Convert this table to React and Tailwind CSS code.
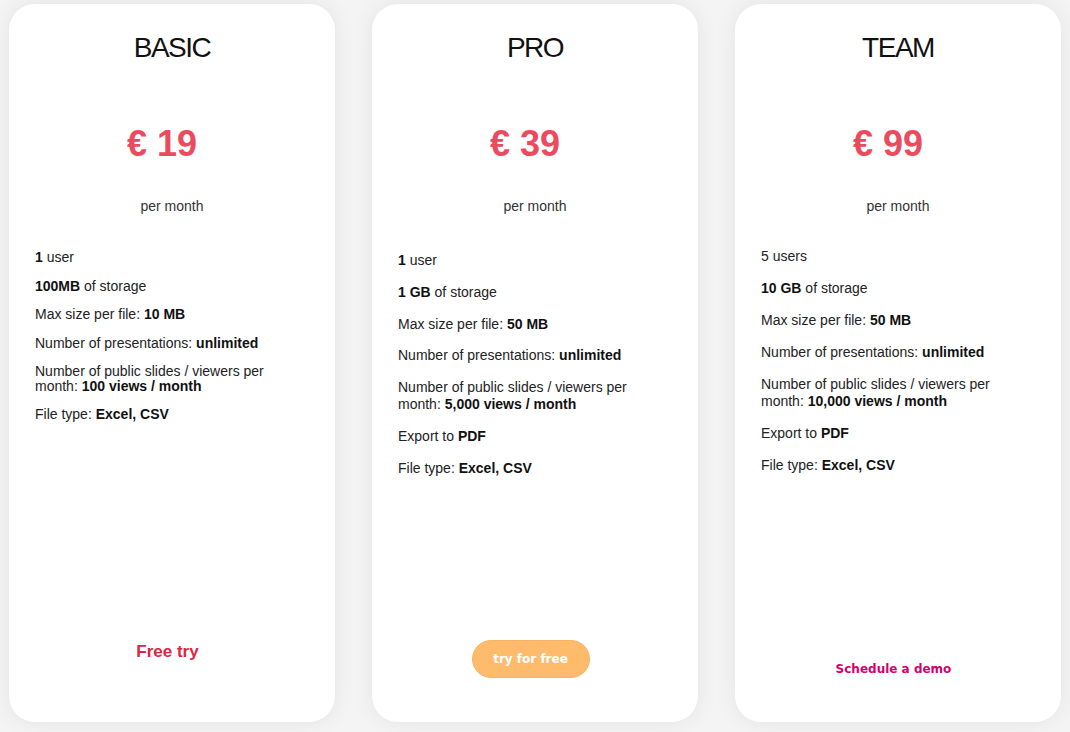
const plans = [
  {
    name: 'BASIC',
    price: '€ 19',
    featClass: 'mt-[34px] gap-[14px] leading-[14.5px]',
    features: [
      [<b key="b">1</b>, ' user'],
      [<b key="b">100MB</b>, ' of storage'],
      ['Max size per file: ', <b key="b">10 MB</b>],
      ['Number of presentations: ', <b key="b">unlimited</b>],
      [<span key="a" className="block">Number of public slides / viewers per</span>, <span key="m">month: </span>, <b key="b">100 views / month</b>],
      ['File type: ', <b key="b">Excel, CSV</b>],
    ],
    footer: (
      <div className="pb-[60px] pr-[9px] flex justify-center">
        <a className="text-[17px] leading-[20px] font-bold text-[#dc2544] cursor-pointer">Free try</a>
      </div>
    ),
  },
  {
    name: 'PRO',
    price: '€ 39',
    featClass: 'mt-[36px] gap-[14.5px] leading-[17.3px]',
    features: [
      [<b key="b">1</b>, ' user'],
      [<b key="b">1 GB</b>, ' of storage'],
      ['Max size per file: ', <b key="b">50 MB</b>],
      ['Number of presentations: ', <b key="b">unlimited</b>],
      [<span key="a" className="block">Number of public slides / viewers per</span>, <span key="m">month: </span>, <b key="b">5,000 views / month</b>],
      ['Export to ', <b key="b">PDF</b>],
      ['File type: ', <b key="b">Excel, CSV</b>],
    ],
    footer: (
      <div className="pb-[44px] pr-[9px] flex justify-center">
        <button className="h-[38px] w-[118px] rounded-full bg-[#fdbb6b] border border-[#f9b462] text-white text-[12px] font-bold font-['DejaVu_Sans',sans-serif]">
          try for free
        </button>
      </div>
    ),
  },
  {
    name: 'TEAM',
    price: '€ 99',
    featClass: 'mt-[32px] gap-[14.7px] leading-[17.3px]',
    features: [
      ['5 users'],
      [<b key="b">10 GB</b>, ' of storage'],
      ['Max size per file: ', <b key="b">50 MB</b>],
      ['Number of presentations: ', <b key="b">unlimited</b>],
      [<span key="a" className="block">Number of public slides / viewers per</span>, <span key="m">month: </span>, <b key="b">10,000 views / month</b>],
      ['Export to ', <b key="b">PDF</b>],
      ['File type: ', <b key="b">Excel, CSV</b>],
    ],
    footer: (
      <div className="pb-[45px] pr-[9px] flex justify-center">
        <a className="text-[12px] leading-[16px] font-bold text-[#d6006c] font-['DejaVu_Sans',sans-serif] cursor-pointer">
          Schedule a demo
        </a>
      </div>
    ),
  },
];

export default function App() {
  return (
    <div className="min-h-screen bg-[#f4f4f4] pt-[4px] px-[9px] font-['Liberation_Sans',Arial,sans-serif]">
      <div className="grid grid-cols-3 gap-[37px]">
        {plans.map(p => (
          <div
            key={p.name}
            className="h-[718px] bg-white rounded-[26px] shadow-[0_0_22px_rgba(0,0,0,0.07)] flex flex-col pt-[28px]"
          >
            {/* Cabecera */}
            <h2 className="text-center text-[28px] leading-[32px] tracking-[-1.5px] text-[#111]">{p.name}</h2>
            <div className="mt-[60px] text-center pr-5 text-[36px] leading-[40px] font-bold text-[#eb4a5f]">{p.price}</div>
            <div className="mt-[32px] text-center text-[14px] leading-[20px] text-[#333]">per month</div>

            {/* Características */}
            <ul className={`flex flex-col flex-1 px-[26px] text-[14px] text-[#222] ${p.featClass}`}>
              {p.features.map((f, i) => (
                <li key={i} className="[&_b]:text-[#111]">{f}</li>
              ))}
            </ul>

            {p.footer}
          </div>
        ))}
      </div>
    </div>
  );
}
